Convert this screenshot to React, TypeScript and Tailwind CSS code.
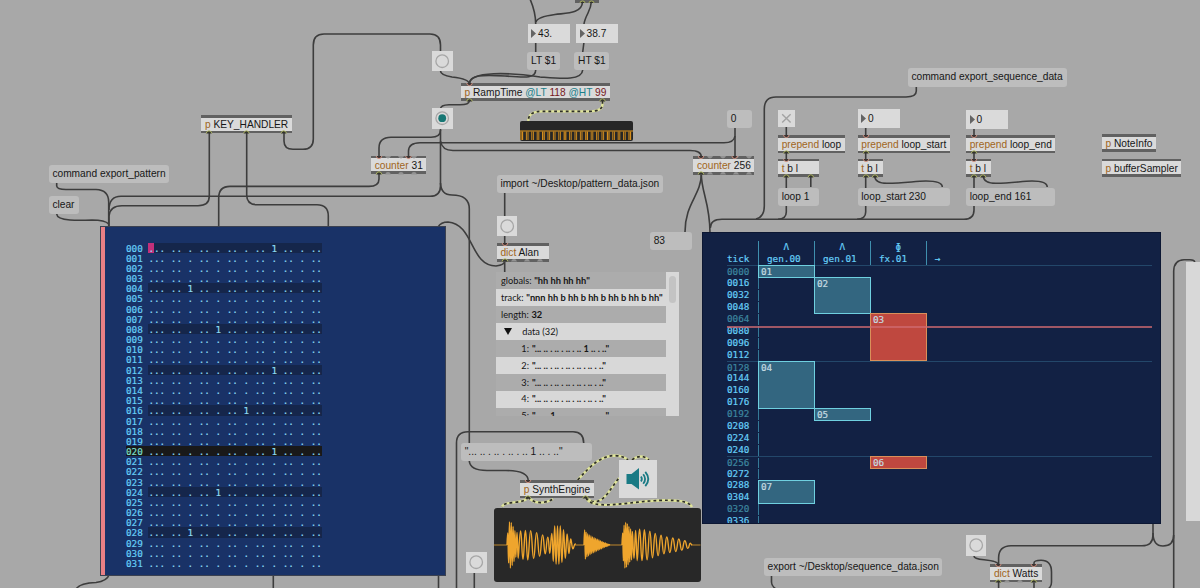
import React from "react";

type Box = { x: number; y: number; w: number; h?: number };

const place = ({ x, y, w, h }: Box) => ({ left: x, top: y, width: w, height: h });

const Word = ({ children }: { children: string }) => (
  <span className="text-[#a0651c]">{children}</span>
);

const Arg = ({ children }: { children: string }) => (
  <span className="text-[#76191c]">{children}</span>
);

const Attr = ({ children }: { children: string }) => (
  <span className="text-[#1b808b]">{children}</span>
);

const PatchObject = ({
  children,
  ins = [],
  outs = [],
  notched = "none",
  ...box
}: Box & {
  children: React.ReactNode;
  ins?: number[];
  outs?: number[];
  notched?: "none" | "both" | "bottom";
}) => (
  <div
    className="absolute flex flex-col bg-[#dadada] whitespace-pre text-[#171717]"
    style={place({ h: 18.4, ...box })}
  >
    <div className="h-[2.8px] shrink-0 bg-[#616161]" />
    <div className="flex grow items-center pl-[3.7px] leading-none">
      <span className="relative top-px">{children}</span>
    </div>
    <div className="h-[2.8px] shrink-0 bg-[#616161]" />
    <svg className="absolute inset-0 h-full w-full overflow-visible">
      {notched !== "none" &&
        [14, 27, 40, 53].filter((n) => n < box.w - 4).map((n) => (
          <g key={n} fill="#929292">
            {notched === "both" && <path d={`M${n} 0h6q-1 2.4-3 2.4t-3-2.4`} />}
            <path d={`M${n} 18.4h6q-1-2.4-3-2.4t-3 2.4`} />
          </g>
        ))}
      {ins.map((n) => (
        <path key={n} d={`M${n - 2.8} 0q.4 2.6 2.8 2.6t2.8-2.6`} fill="#3b3332" stroke="#d89482" strokeWidth=".9" />
      ))}
      {outs.map((n) => (
        <path key={n} d={`M${n - 2.8} 18.4q.4-2.6 2.8-2.6t2.8 2.6`} fill="#34352e" stroke="#b9c167" strokeWidth=".9" />
      ))}
    </svg>
  </div>
);

const Message = ({ children, ...box }: Box & { children: React.ReactNode }) => (
  <div
    className="absolute flex items-center rounded-[3px] bg-[#bdbdbd] pl-[3.7px] leading-none whitespace-pre text-[#171717]"
    style={place({ h: 18.4, ...box })}
  >
    {children}
  </div>
);

const NumberBox = ({ children, ...box }: Box & { children: React.ReactNode }) => (
  <div
    className="absolute flex items-center gap-[2px] bg-[#dadada] pl-[3.5px] leading-none text-[#171717]"
    style={place({ h: 18.6, ...box })}
  >
    <svg className="h-[9px] w-[5px]" viewBox="0 0 5 9">
      <path d="M0 0L5 4.5L0 9Z" fill="#646464" />
    </svg>
    <span className="pt-px">{children}</span>
  </div>
);

const Bang = ({ x, y, on }: { x: number; y: number; on?: boolean }) => (
  <div className="absolute h-[20.4px] w-[20.4px] bg-[#dadada]" style={{ left: x, top: y }}>
    <svg className="h-full w-full" viewBox="0 0 20.4 20.4">
      <circle cx="10.2" cy="10.2" r="6.3" fill="none" stroke="#a6a6a6" strokeWidth="1.3" />
      {on && <circle cx="10.2" cy="10.2" r="3.9" fill="#177774" />}
    </svg>
  </div>
);

const cords = [
  // key handler
  "M209.3 133V196Q209.3 205.7 198 205.7H122Q110 205.7 109 216V227",
  "M246.7 133V195Q246.7 204.7 257 204.7H317Q328.3 204.7 328.3 216V227",
  "M284 133V141Q284 149.3 293 149.3H303Q313.3 149.3 313.3 139V45Q313.3 34 324 34H430Q440.5 34 440.5 45V51",
  "M56.7 183V186Q57 189.5 66 189.5H96Q108.7 190 108.7 202V227",
  "M56.7 214Q57 219 70 220Q78 220.6 92 220Q105 220 108.7 224",
  // ramp time
  "M440.5 71Q440.5 75 452 77Q469.3 79 469.3 84",
  "M530 -1Q535.7 12 535.7 24",
  "M582.5 2C582 14 565 13 555 14.5Q537 17 536 22",
  "M591.3 2Q591 7 588 13Q584.5 20 584 24",
  "M535.7 42V52",
  "M584 42L582.7 52",
  "M535.7 70C535.7 78.5 526 77.5 505 76C482 74.5 469.5 75 469.3 84",
  "M582.7 70C582 81 560 78.5 540 77C510 72.5 470 70.5 469.3 84",
  "M469.3 101Q469 104.8 460 104.8H449Q440.5 105 440.5 109",
  // clock
  "M440.5 128V186Q440.5 196.3 430 196.3H121Q109 196.3 109 210",
  "M440.5 183Q441 195 452 195Q469.3 195 469.3 209V443",
  "M440.5 130Q440.5 137.3 431 137.3H391Q379 137.5 379 148V157",
  "M735 128V157",
  "M735 136Q734 142.8 724 142.8H420Q408.7 143 408.5 151V157",
  "M440.5 141Q442 150.5 453 150.5H690Q701.3 150.5 701.3 157",
  "M379 174V179Q379 186.4 369 186.4H230Q218.7 186.4 218.7 198V227",
  "M701.3 174C701.3 195 685 203 685 232",
  "M701.3 174C701.3 192 710 203 710 233",
  // sequencer commands
  "M916.3 87V91Q916.3 97 906 97H776Q764.3 97 764.3 109V206Q764.3 217 756 219",
  "M974 128V210Q974 219.3 964 219.3H722Q710.3 219.3 710.3 228",
  "M786.3 127V212Q786.3 219 778 219.3",
  "M865.7 128V212Q865.7 219 857 219.3",
  "M810.8 176V187",
  "M874.7 176Q875 183.3 887 183.3C905 183.3 915 181 926 181Q942.3 181 942.3 187",
  "M983.3 176Q983.6 183.3 996 183.3C1012 183.3 1022 181 1032 181Q1047.2 181 1047.2 187",
  // pattern dict
  "M504.7 193V273",
  "M438 227Q441 222 448 222C474 224 470 266 496 266Q504.7 265 504.7 261",
  // synth
  "M456.5 589V443Q456.5 431.7 468 431.7H573Q583.7 431.7 583.7 443",
  "M469.3 461Q470 470.5 487 470.5H506Q528.3 470.5 528.3 481",
  "M474.3 573V589",
  "M109 575Q107 581 96 582.5Q80 583 76 589",
  "M273.3 575V589",
  "M438.5 575V589",
  // watts dict
  "M1153 524V535Q1153 545.8 1142 545.8H1011Q998.6 546 998.6 558V565",
  "M1153 533Q1153 546 1163 546Q1173.7 546 1173.7 535",
  "M1173.7 589V271Q1174 260 1184 259.7H1190Q1194.5 259.7 1194.7 262",
  "M974 556Q974 559 984 559.7Q998.6 561 998.6 565",
  "M1034 565V563Q1034 560.3 1041 560.3Q1051.5 560.3 1051.5 572V582Q1051.5 587 1048 589",
  "M998.6 582V589",
  "M1034 582V589",
  "M771.5 576V582Q771.5 586 776 589",
];

const signals = [
  "M602.5 101V104Q602.5 111.3 590 111.3H542Q528.3 111.3 528.3 121",
  "M577.7 480C592 464 601 456 615 455.5Q624 456 628 460",
  "M632 460Q641 453 649 460",
  "M586 498C601 510 609 490 619 478",
  "M586 498C592 510 623 503 650 501Q688 498 692 507",
  "M528.3 497C524 505 504 500 502 507",
  "M528.3 497C533 504 545 504 553 499",
];

const Cords = () => (
  <svg className="absolute inset-0" width="1200" height="588" fill="none">
    {cords.map((d) => (
      <path key={d} d={d} stroke="#3d3d3d" strokeWidth="1.6" />
    ))}
    {signals.map((d) => (
      <g key={d}>
        <path d={d} stroke="#dfe49a" strokeWidth="2.3" />
        <path d={d} stroke="#2e2e2a" strokeWidth="1.7" strokeDasharray="2.8 3" />
      </g>
    ))}
  </svg>
);

const EMPTY = "... .. . .. . .. . .. . .. . ..";

// row -> character index of the trigger
const triggers: Record<number, number> = { 0: 22, 4: 7, 8: 12, 12: 22, 16: 17, 20: 22, 24: 12, 28: 7 };

const PatternRow = ({ n }: { n: number }) => {
  const at = triggers[n];
  const steps = at === undefined ? EMPTY : EMPTY.slice(0, at) + "1" + EMPTY.slice(at + 1);
  const active = n === 20;
  const beat = n % 4 === 0;
  return (
    <div
      className={`flex h-[10.18px] w-[196px] leading-[11.4px] whitespace-pre ${
        active ? "bg-[#191919] text-[#7adfc8]" : "text-[#66cef7]"
      }`}
    >
      <span className="w-[22.4px]">{String(n).padStart(3, "0")}</span>
      <span className={`grow text-[#8ddcf4] ${beat && !active ? "bg-[#15264b]" : ""}`}>
        {n === 0 ? (
          <>
            <span className="inline-block h-[10.18px] bg-[#c2307a] align-top">.</span>
            {steps.slice(1)}
          </>
        ) : (
          steps
        )}
      </span>
    </div>
  );
};

const PatternEditor = () => (
  <div className="absolute top-[226px] left-[100px] flex h-[349.5px] w-[346px] border border-[#3b4150] bg-[#193267] font-['DejaVu_Sans_Mono',monospace] text-[9.3px] [-webkit-text-stroke:0.2px]">
    <div className="w-[4px] bg-[#e98085]" />
    <div className="pt-[15.6px] pl-[21px]">
      {Array.from({ length: 32 }, (_, n) => (
        <PatternRow key={n} n={n} />
      ))}
    </div>
  </div>
);

const ROW = 11.906;

const clips = [
  { id: "01", col: 0, row: 0, rows: 1 },
  { id: "02", col: 1, row: 1, rows: 3 },
  { id: "03", col: 2, row: 4, rows: 4, fx: true },
  { id: "04", col: 0, row: 8, rows: 4 },
  { id: "05", col: 1, row: 12, rows: 1 },
  { id: "06", col: 2, row: 16, rows: 1, fx: true },
  { id: "07", col: 0, row: 18, rows: 2 },
];

const tracks = [
  { glyph: "Λ", name: "gen.00" },
  { glyph: "Λ", name: "gen.01" },
  { glyph: "ɸ", name: "fx.01" },
];

const Sequencer = () => (
  <div className="absolute top-[232px] left-[702px] h-[292px] w-[459px] overflow-hidden border border-[#0c1733] bg-[#122144] pt-[8px] pl-[24px] font-['DejaVu_Sans_Mono',monospace] text-[9.3px] text-[#66cef7] [-webkit-text-stroke:0.2px]">
    <div className="flex h-[24.4px] leading-[12px]">
      <div className="w-[31px] pt-[12.4px]">tick</div>
      {tracks.map((t) => (
        <div key={t.name} className="flex w-[56px] flex-col border-l border-[#3f8fae] pl-[8px]">
          <span className="pl-[16.5px]">{t.glyph}</span>
          <span>{t.name}</span>
        </div>
      ))}
      <div className="border-l border-[#3f8fae] pt-[12.4px] pl-[8px]">→</div>
    </div>
    <div className="relative w-[425px]">
      {Array.from({ length: 22 }, (_, i) => (
        <div
          key={i}
          className={`flex h-[11.906px] ${
            i % 8 === 0 ? "border-t border-[#23476a] leading-[11px]" : "leading-[12.6px]"
          } ${i % 4 === 0 ? "text-[#3d869f]" : ""}`}
        >
          <span className="w-[31px]">{String(i * 16).padStart(4, "0")}</span>
          <span className="mt-[1px] w-px bg-[#357a98]" />
        </div>
      ))}
      {clips.map((c) => (
        <div
          key={c.id}
          className={`absolute w-[57px] border pl-[2px] leading-[11px] text-[#c5dbe2] ${
            c.fx ? "border-[#d9905a] bg-[#bf483f]" : "border-[#6fd0e0] bg-[#336680]"
          }`}
          style={{ left: 31 + c.col * 56, top: c.row * ROW, height: c.rows * ROW + 0.8 }}
        >
          {c.id}
        </div>
      ))}
      <div className="absolute top-[61px] left-0 h-[1.5px] w-full bg-[#cf6a70]/75" />
    </div>
  </div>
);

const dictRows = [
  { name: "globals", value: '"hh hh hh hh"' },
  { name: "track", value: '"nnn hh b hh b hh b hh b hh b hh"' },
  { name: "length", value: "32" },
];

const dataRows = [
  '"... .. . .. . .. . .. 1 .. . .."',
  '"... .. . .. . .. . .. . .. . .."',
  '"... .. . .. . .. . .. . .. . .."',
  '"... .. . .. . .. . .. . .. . .."',
  '"... .. 1 .. . .. . .. . .. . .."',
];

const DictView = () => (
  <div className="absolute top-[272.4px] left-[496.3px] flex h-[143.6px] w-[182.7px] overflow-hidden font-[Lato,sans-serif] text-[9.25px] text-[#161616]">
    <div className="w-[169.3px] shrink-0">
      {dictRows.map((r, i) => (
        <div
          key={r.name}
          className={`flex h-[16.95px] items-center gap-[2.6px] pl-[4.7px] whitespace-pre ${i % 2 ? "bg-[#d8d8d8]" : "bg-[#acacac]"}`}
        >
          <span>{r.name}:</span>
          <b>{r.value}</b>
        </div>
      ))}
      <div className="flex h-[16.95px] items-center gap-[10px] bg-[#d8d8d8] pl-[8px]">
        <svg className="h-[7px] w-[8px]" viewBox="0 0 8 7">
          <path d="M0 0H8L4 7Z" fill="#111" />
        </svg>
        <span>data (32)</span>
      </div>
      {dataRows.map((value, i) => (
        <div
          key={i}
          className={`flex h-[16.95px] items-center gap-[3px] pl-[25px] whitespace-pre ${i % 2 ? "bg-[#d8d8d8]" : "bg-[#acacac]"}`}
        >
          <span>{i + 1}:</span>
          <b>{value}</b>
        </div>
      ))}
    </div>
    <div className="flex grow justify-center bg-[#d8d8d8] pt-[4px]">
      <div className="h-[27px] w-[7px] rounded-full bg-[#c3c3c3]" />
    </div>
  </div>
);

const PulseScope = () => (
  <div className="absolute top-[121px] left-[520.3px] h-[20px] w-[113px] overflow-hidden rounded-[2px] bg-[#262626]">
    <svg className="h-full w-full" viewBox="0 0 113 20">
      <path d="M0 10H113" stroke="#e0951e" strokeWidth="1.1" />
      {Array.from({ length: 21 }, (_, i) => (
        <path
          key={i}
          d={`M${1 + i * 5.4} 19V10.5M${2.6 + i * 5.4} 10.5V19`}
          fill="none"
          stroke="#e0951e"
          strokeWidth={i % 4 === 0 ? 1.1 : 0.9}
        />
      ))}
    </svg>
  </div>
);

// x, amplitude, distance to the next peak
const bursts: [number, number, number][][] = [
  [[13, 12, 0.8], [14.5, 23, 0.9], [16, 23, 0.9], [18, 19, 0.9], [21, 12, 1.2], [24, 14, 2.4], [32, 15, 2.9], [38, 13, 3], [46, 10, 2.6], [53, 7, 2], [56, 12, 1.5], [59, 19, 1.4], [65, 19, 1.6], [69, 14, 1.8], [75, 6, 2.2], [79, 1, 2]],
  [[90, 15, 0.7], [92, 12, 0.8], [96, 9, 0.8], [102, 6, 0.8], [108, 3, 0.8], [114, 0.5, 1]],
  [[128, 12, 0.7], [130, 23, 0.8], [132, 22, 0.8], [135, 17, 0.9], [138, 13, 1.6], [142, 16, 2.4], [150, 15, 2.7], [160, 11, 2.9], [170, 8, 3], [182, 6, 3], [192, 3, 2.4], [196, 0.5, 2]],
];

const wave = (points: [number, number, number][]) => {
  const end = points[points.length - 1][0];
  let x = points[0][0];
  let side = -1;
  let d = `M${x} 37`;
  let seg = 0;
  while (x < end) {
    while (seg < points.length - 2 && points[seg + 1][0] <= x) seg++;
    const [x0, a0, step] = points[seg];
    const [x1, a1] = points[seg + 1];
    const amp = a0 + ((a1 - a0) * (x - x0)) / (x1 - x0);
    const next = x + step;
    d += `S${(x + step / 2).toFixed(2)} ${(37 + side * amp).toFixed(2)} ${next.toFixed(2)} ${(37 + side * amp).toFixed(2)}`;
    x = next;
    side = -side;
  }
  return d + `L${end + 2} 37`;
};

const Waveform = () => (
  <div className="absolute top-[508px] left-[494px] h-[74px] w-[206.5px] rounded-[3px] bg-[#282828]">
    <svg className="h-full w-full" viewBox="0 0 206.5 74" fill="none" stroke="#efa52d">
      <path d="M0 37H13M80 37H90M114 37H128M197 37H206.5" strokeWidth="1" opacity=".75" />
      {bursts.map((b, i) => (
        <path key={i} d={wave(b)} strokeWidth="1.4" />
      ))}
    </svg>
  </div>
);

const Speaker = () => (
  <div className="absolute top-[460.3px] left-[619px] h-[38px] w-[38px] bg-[#dadada]">
    <svg className="h-full w-full" viewBox="0 0 38 38" fill="none" stroke="#197a84" strokeWidth="1.8">
      <path d="M7.5 14H12.5L20 8V29.5L12.5 24H7.5Z" fill="#197a84" stroke="none" />
      <path d="M22 16.6Q23.7 19 22 21.4" />
      <path d="M24.2 14.2Q28 19 24.2 23.8" />
      <path d="M26.3 11.8Q32.3 19 26.3 26.2" />
    </svg>
  </div>
);

export default function App() {
  return (
    <div className="relative h-[588px] w-[1200px] overflow-hidden bg-[#a8a8a8] font-['Liberation_Sans',Arial,sans-serif] text-[10.2px]">
      <Cords />

      <PatchObject x={201.3} y={115} w={90.5} outs={[8, 45.4, 82.7]}>
        <Word>p</Word> KEY_HANDLER
      </PatchObject>
      <Message x={48.7} y={165} w={120}>command export_pattern</Message>
      <Message x={48.7} y={195.6} w={30}>clear</Message>

      <div className="absolute top-0 left-[575px] h-[3px] w-[24px] bg-[#616161]">
        <svg className="h-full w-full" viewBox="0 0 24 3">
          <path d="M5 3q0-2 2.5-2t2.5 2M14 3q0-2 2.5-2t2.5 2" fill="#34352e" stroke="#b9c167" strokeWidth=".9" />
        </svg>
      </div>
      <NumberBox x={527.5} y={24} w={42.3}>43.</NumberBox>
      <NumberBox x={576} y={24} w={42}>38.7</NumberBox>
      <Message x={527.3} y={51.8} w={32.4}>LT $1</Message>
      <Message x={574.4} y={51.8} w={35}>HT $1</Message>
      <Bang x={432.2} y={50.6} />
      <Bang x={432.2} y={108.3} on />
      <PatchObject x={460.8} y={82.9} w={149} ins={[8.5]} outs={[8.5, 141.5]}>
        <Word>p</Word> RampTime <Attr>@LT</Attr> <Arg>118</Arg> <Attr>@HT</Attr> <Arg>99</Arg>
      </PatchObject>
      <PulseScope />
      <PatchObject x={371} y={155.7} w={55} ins={[8, 37.5]} outs={[8]} notched="both">
        <Word>counter</Word> 31
      </PatchObject>

      <Message x={727} y={109.7} w={25}>0</Message>
      <PatchObject x={693.3} y={156.2} w={61} ins={[8, 41.7]} outs={[8]} notched="both">
        <Word>counter</Word> 256
      </PatchObject>
      <Message x={650} y={231.8} w={42.3}>83</Message>

      <Message x={907.7} y={68.3} w={159}>command export_sequence_data</Message>
      <div className="absolute top-[110px] left-[778px] h-[17px] w-[17px] bg-[#dadada]">
        <svg className="h-full w-full" viewBox="0 0 17 17">
          <path d="M4.2 4.2L12.6 12.6M12.6 4.2L4.2 12.6" stroke="#a2a2a2" strokeWidth="1.4" />
        </svg>
      </div>
      <PatchObject x={778} y={135} w={67.3} ins={[8.3]} outs={[8.3]}>
        <Word>prepend</Word> loop
      </PatchObject>
      <PatchObject x={778} y={158.6} w={40.7} ins={[8.3]} outs={[8.3, 32.8]}>
        <Word>t</Word> b l
      </PatchObject>
      <Message x={778} y={187.6} w={41}>loop 1</Message>

      <NumberBox x={857.6} y={109.2} w={42.4}>0</NumberBox>
      <PatchObject x={857.6} y={135} w={92.7} ins={[8]} outs={[8]}>
        <Word>prepend</Word> loop_start
      </PatchObject>
      <PatchObject x={857.6} y={158.6} w={25} ins={[8]} outs={[8, 17]}>
        <Word>t</Word> b l
      </PatchObject>
      <Message x={857.6} y={187.6} w={92.7}>loop_start 230</Message>

      <NumberBox x={966} y={110} w={42.3}>0</NumberBox>
      <PatchObject x={966} y={135} w={89.3} ins={[8]} outs={[8]}>
        <Word>prepend</Word> loop_end
      </PatchObject>
      <PatchObject x={966} y={158.6} w={25} ins={[8]} outs={[8, 17]}>
        <Word>t</Word> b l
      </PatchObject>
      <Message x={966} y={187.6} w={89.3}>loop_end 161</Message>

      <PatchObject x={1101.8} y={133.8} w={54.2}>
        <Word>p</Word> NoteInfo
      </PatchObject>
      <PatchObject x={1101.8} y={158.6} w={79.5}>
        <Word>p</Word> bufferSampler
      </PatchObject>

      <Message x={496.7} y={174.8} w={166.3}>import ~/Desktop/pattern_data.json</Message>
      <Bang x={496.7} y={216.1} />
      <PatchObject x={496.7} y={243.3} w={52} ins={[8]} outs={[8]} notched="bottom">
        <Word>dict</Word> Alan
      </PatchObject>
      <DictView />

      <PatternEditor />
      <Sequencer />

      <Message x={461} y={442.6} w={130.5}>
        {'"... .. . .. . .. . .. 1 .. . .."'}
      </Message>
      <PatchObject x={520.1} y={480} w={73.9} ins={[8]} outs={[8, 65.5]}>
        <Word>p</Word> SynthEngine
      </PatchObject>
      <Speaker />
      <Waveform />
      <Bang x={466.2} y={552.3} />

      <Message x={763.8} y={557.7} w={178}>export ~/Desktop/sequence_data.json</Message>
      <Bang x={966} y={535.4} />
      <PatchObject x={990.2} y={564} w={52} ins={[8.3, 43.8]} outs={[8.3, 43.8]} notched="bottom">
        <Word>dict</Word> Watts
      </PatchObject>
      <div className="absolute top-[262px] left-[1186px] h-[259px] w-[14px] bg-[#d8d8d8]" />
    </div>
  );
}
